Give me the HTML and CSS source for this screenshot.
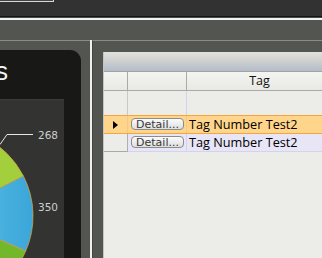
FILE: index.html
```html
<!DOCTYPE html>
<html lang="en">
<head>
    <meta charset="UTF-8">
    <title>Tag Dashboard</title>
    <link rel="stylesheet" href="styles.css">
</head>
<body>
    <div class="topbar">
        <div class="search"></div>
    </div>
    <div class="band"></div>
    <div class="main">
        <div class="left">
            <div class="panel">
                <div class="title"><span>Tags</span></div>
                <div class="chart">
                    <svg class="pie" width="64" height="160" viewBox="0 99 64 160">
                        <defs>
                            <linearGradient id="blue" x1="0" y1="0" x2="1" y2="0">
                                <stop offset="0" stop-color="#62c2ea"/>
                                <stop offset="1" stop-color="#3aa6d8"/>
                            </linearGradient>
                        </defs>
                        <path d="M -55 215 L 23.4 175 A 88 88 0 0 0 -70.3 128.3 Z" fill="#a3cf3c" stroke="#c9a24a" stroke-width="0.8"/>
                        <path d="M -55 215 L 25.7 250.1 A 88 88 0 0 0 23.4 175 Z" fill="url(#blue)" stroke="#c9a24a" stroke-width="0.8"/>
                        <path d="M -55 215 L -70.3 301.7 A 88 88 0 0 0 25.7 250.1 Z" fill="#72b82a" stroke="#c9a24a" stroke-width="0.8"/>
                        <polyline points="0,143.5 7,133.5 33,133.5" fill="none" stroke="#e6e6e6" stroke-width="1"/>
                        <text class="label" x="38" y="138">268</text>
                        <text class="label" x="38" y="210">350</text>
                    </svg>
                </div>
            </div>
        </div>
        <div class="divider"></div>
        <div class="right">
            <div class="grid">
                <div class="grid-top"></div>
                <div class="row head">
                    <div class="cell rh"></div>
                    <div class="cell"></div>
                    <div class="cell tag">Tag</div>
                </div>
                <div class="row blank">
                    <div class="cell rh"></div>
                    <div class="cell"></div>
                    <div class="cell"></div>
                </div>
                <div class="row data selected">
                    <div class="cell rh"><span class="arrow"></span></div>
                    <div class="cell"><button class="detail">Detail...</button></div>
                    <div class="cell text">Tag Number Test2</div>
                </div>
                <div class="row data">
                    <div class="cell rh"></div>
                    <div class="cell"><button class="detail">Detail...</button></div>
                    <div class="cell text">Tag Number Test2</div>
                </div>
            </div>
        </div>
    </div>
</body>
</html>
```

FILE: styles.css
```css
html, body {
    margin: 0;
    padding: 0;
}
body {
    width: 322px;
    height: 258px;
    overflow: hidden;
    background-color: #323232;
    font-family: 'DejaVu Sans', sans-serif;
}
.topbar {
    height: 16px;
    background-color: #323232;
    border-bottom: 1px solid #151515;
}
.search {
    width: 53px;
    height: 1px;
    background-color: #444;
    border-right: 1px solid #d8d8d8;
    border-bottom: 1px solid #d8d8d8;
}
.band {
    height: 22px;
    background-color: #535550;
    border-top: 1px solid #4a4a4a;
    box-shadow: inset 0 2px 0 #f2f2f2;
}
.main {
    display: flex;
    height: 218px;
}
.left {
    width: 90px;
    background-color: #535550;
    border-top: 1px solid #8a8c88;
    padding-top: 9px;
}
.panel {
    width: 81px;
    height: 220px;
    background-color: #181817;
    border-top-right-radius: 11px;
}
.title {
    display: flex;
    justify-content: flex-end;
    padding: 7px 73px 0 0;
    height: 42px;
    overflow: hidden;
    color: #f4f4f4;
    font-family: 'Liberation Sans', sans-serif;
    font-size: 25px;
    white-space: nowrap;
}
.chart {
    width: 64px;
    height: 160px;
    background-color: #333331;
    border-top: 1px solid #3c3c3a;
}
.pie {
    display: block;
}
.label {
    fill: #cfcfcf;
    font-family: 'DejaVu Sans', sans-serif;
    font-size: 10.5px;
}
.divider {
    width: 2px;
    background-color: #f0f0f0;
}
.right {
    flex: 1;
    background-color: #535550;
    border-top: 1px solid #8a8c88;
    border-left: 1px solid #454643;
    padding: 11px 0 0 10px;
    overflow: hidden;
}
.grid {
    width: 240px;
    height: 220px;
    background-color: #ecede8;
    border-left: 1px solid #c4c5c0;
}
.grid-top {
    height: 19px;
    background: linear-gradient(#e0e1dc, #d2d3d0 40%, #b3bccb);
    border-bottom: 1px solid #a3a4a0;
}
.row {
    display: grid;
    grid-template-columns: 24px 59px 146px;
}
.cell {
    border-right: 1px solid #d4d3ee;
    box-sizing: border-box;
}
.head {
    height: 19px;
    background: linear-gradient(#f4f5f1, #e8e9e4);
    border-bottom: 1px solid #a9aaa6;
    box-sizing: border-box;
}
.head .cell {
    border-right-color: #a9aaa6;
}
.tag {
    text-align: center;
    font-family: 'Open Sans', sans-serif;
    font-size: 12.5px;
    line-height: 18px;
    color: #111;
}
.blank {
    height: 24px;
}
.blank .rh {
    border-right-color: #c8c8c8;
}
.data {
    height: 18px;
    background-color: #e7e5f6;
    border-bottom: 1px solid #d4d3ee;
    box-sizing: border-box;
}
.data .rh {
    background-color: #ecede8;
    border-right-color: #b0b0b0;
    border-bottom: 1px solid #a9aaa6;
    margin-bottom: -1px;
}
.selected {
    height: 19px;
    background-color: #ffd58c;
    border-top: 1px solid #f4a53c;
    border-bottom: 1px solid #f4a53c;
}
.selected .rh {
    background-color: #ffd58c;
    border-bottom: none;
    margin-bottom: 0;
    border-right-color: #f0b060;
    display: flex;
    align-items: center;
    padding-left: 9px;
}
.selected .cell {
    border-right-color: #f3c98a;
}
.arrow {
    width: 0;
    height: 0;
    border-left: 5px solid #000;
    border-top: 4.5px solid transparent;
    border-bottom: 4.5px solid transparent;
}
.detail {
    display: block;
    width: 53px;
    height: 12px;
    margin: 2px 0 0 3px;
    padding: 0;
    border: 1px solid #8c8c8c;
    border-radius: 4px;
    background: linear-gradient(#fbfbfb, #dedede);
    color: #3a3a3a;
    font-family: 'DejaVu Sans', sans-serif;
    font-size: 11px;
    line-height: 9px;
}
.text {
    font-family: 'Open Sans', sans-serif;
    font-size: 12.7px;
    line-height: 16px;
    color: #000;
    padding-left: 2px;
    white-space: nowrap;
}
```
